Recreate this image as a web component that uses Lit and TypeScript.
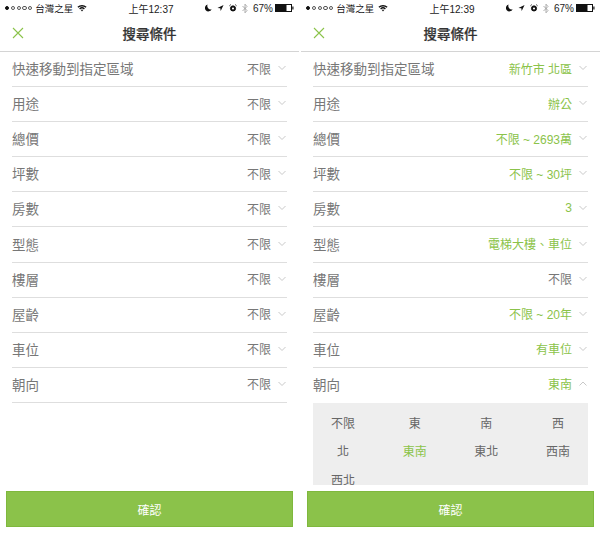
import { LitElement, html, css, svg } from 'lit';
import { customElement, property } from 'lit/decorators.js';

type Row = { label: string; value: string; on?: boolean; open?: boolean };

const LABELS = ['快速移動到指定區域', '用途', '總價', '坪數', '房數', '型態', '樓層', '屋齡', '車位', '朝向'];

const LEFT_ROWS: Row[] = LABELS.map((label) => ({ label, value: '不限' }));

const RIGHT_ROWS: Row[] = [
  { label: '快速移動到指定區域', value: '新竹市 北區', on: true },
  { label: '用途', value: '辦公', on: true },
  { label: '總價', value: '不限 ~ 2693萬', on: true },
  { label: '坪數', value: '不限 ~ 30坪', on: true },
  { label: '房數', value: '3', on: true },
  { label: '型態', value: '電梯大樓、車位', on: true },
  { label: '樓層', value: '不限' },
  { label: '屋齡', value: '不限 ~ 20年', on: true },
  { label: '車位', value: '有車位', on: true },
  { label: '朝向', value: '東南', on: true, open: true },
];

const DIRECTIONS = ['不限', '東', '南', '西', '北', '東南', '東北', '西南', '西北'];

@customElement('search-phone')
class SearchPhone extends LitElement {
  static styles = css`
    :host {
      display: flex;
      flex-direction: column;
      height: 533px;
      background: #fff;
      overflow: hidden;
    }
    .status {
      height: 16px;
      padding: 0 5px 1px;
      display: grid;
      grid-template-columns: 1fr auto 1fr;
      align-items: center;
      font-size: 10px;
      color: #222;
    }
    .status-left, .status-right {
      display: flex;
      align-items: center;
    }
    .status-left { gap: 3px; }
    .status-left .carrier { font-size: 9.5px; }
    .status-left svg { margin-left: 1px; }
    .status-right { justify-content: flex-end; gap: 5px; }
    .pct { margin-right: -3px; font-size: 10px; }
    .time { font-size: 10px; padding-left: 3px; }
    .dots { display: flex; gap: 1.6px; }
    .dot {
      width: 4.2px;
      height: 4.2px;
      border-radius: 50%;
      border: 0.6px solid #555;
      box-sizing: border-box;
    }
    .dot.full { background: #111; border-color: #111; }
    .nav {
      height: 32px;
      padding-bottom: 2px;
      border-bottom: 1px solid #d4d4d4;
      display: flex;
      align-items: center;
      justify-content: center;
      position: relative;
      font-size: 13.5px;
      font-weight: 500;
      -webkit-text-stroke: 0.2px #333;
      color: #333;
    }
    .close {
      position: absolute;
      left: 12px;
      top: 10px;
    }
    .list {
      height: 439px;
      overflow: hidden;
      padding: 0 12px;
      display: flex;
      flex-direction: column;
    }
    .row {
      flex: none;
      height: 32.1px;
      padding-bottom: 2px;
      border-bottom: 1px solid #dedede;
      display: flex;
      align-items: center;
      justify-content: space-between;
      font-size: 13.5px;
      color: #777;
    }
    .row.open { border-bottom: none; }
    .right {
      display: flex;
      align-items: center;
      gap: 7px;
      font-size: 12px;
      padding-right: 1px;
      color: #777;
    }
    .right .on, .panel .on { color: #8bc34a; }
    .panel {
      flex: none;
      background: #eeeeee;
      display: grid;
      grid-template-columns: repeat(4, 60px);
      justify-content: space-between;
      grid-auto-rows: 28.5px;
      align-items: center;
      justify-items: center;
      font-size: 12px;
      color: #666;
      padding-top: 5px;
      height: 77px;
      overflow: hidden;
      margin-top: 1px;
    }
    .confirm {
      margin: 0 6px;
      height: 36px;
      flex: none;
      box-sizing: border-box;
      background: #8bc24a;
      border: 1px solid #7fb83d;
      color: #fff;
      font-size: 12px;
      display: flex;
      align-items: center;
      justify-content: center;
    }
  `;

  @property() time = '';
  @property({ attribute: false }) rows: Row[] = [];

  wifi() {
    return html`<svg width="10" height="8" viewBox="0 0 12 9">
      <path d="M0.5 3 A8 8 0 0 1 11.5 3 L10.3 4.3 A6.2 6.2 0 0 0 1.7 4.3 Z" fill="#111"/>
      <path d="M2.6 5 A5 5 0 0 1 9.4 5 L8.3 6.2 A3.4 3.4 0 0 0 3.7 6.2 Z" fill="#111"/>
      <path d="M4.6 7 A2 2 0 0 1 7.4 7 L6 8.6 Z" fill="#111"/>
    </svg>`;
  }

  statusIcons() {
    return html`
      <svg width="7" height="8" viewBox="0 0 8 9"><path d="M3 0.5 A4 4 0 1 0 7.6 6 A4 4 0 0 1 3 0.5 Z" fill="#111"/></svg>
      <svg width="7" height="8" viewBox="0 0 8 9"><path d="M7.5 1 L0.5 4.5 L3.8 4.8 L4.2 8 Z" fill="#111"/></svg>
      <svg width="8" height="8" viewBox="0 0 9 9"><circle cx="4.5" cy="5" r="2.9" fill="#111" stroke="#111"/><circle cx="4.5" cy="5" r="1.2" fill="#fff"/><path d="M0.5 2 L2 0.7 M8.5 2 L7 0.7" stroke="#111"/></svg>
      <svg width="6" height="11" viewBox="0 0 6 11"><path d="M0.5 3 L5 7.5 L3 9.8 L3 1.2 L5 3.5 L0.5 8" fill="none" stroke="#999" stroke-width="0.8"/></svg>
    `;
  }

  battery() {
    return html`<svg width="19" height="8" viewBox="0 0 19 8">
      <rect x="0.5" y="0.5" width="16" height="7" fill="none" stroke="#111"/>
      <rect x="1" y="1" width="10.5" height="6" fill="#111"/>
      <rect x="17.3" y="2.5" width="1.2" height="3" fill="#111"/>
    </svg>`;
  }

  chevron(up = false) {
    const d = up ? 'M0.5 4.5 L4 1 L7.5 4.5' : 'M0.5 1 L4 4.5 L7.5 1';
    return html`<svg width="8" height="6" viewBox="0 0 8 6">${svg`<path d=${d} fill="none" stroke="#c8c8c8"/>`}</svg>`;
  }

  render() {
    return html`
      <div class="status">
        <div class="status-left">
          <span class="dots">
            <i class="dot full"></i><i class="dot"></i><i class="dot"></i><i class="dot"></i><i class="dot"></i>
          </span>
          <span class="carrier">台灣之星</span>
          ${this.wifi()}
        </div>
        <div class="time">上午${this.time}</div>
        <div class="status-right">
          ${this.statusIcons()}
          <span class="pct">67%</span>
          ${this.battery()}
        </div>
      </div>
      <div class="nav">
        <svg class="close" width="12" height="12" viewBox="0 0 12 12">
          <path d="M1 1 L11 11 M11 1 L1 11" stroke="#8bc34a" stroke-width="1.1"/>
        </svg>
        搜尋條件
      </div>
      <div class="list">
        ${this.rows.map((r) => html`
          <div class="row ${r.open ? 'open' : ''}">
            <span>${r.label}</span>
            <span class="right">
              <span class=${r.on ? 'on' : ''}>${r.value}</span>
              ${this.chevron(r.open)}
            </span>
          </div>
          ${r.open ? html`<div class="panel">
            ${DIRECTIONS.map((d) => html`<span class=${d === r.value ? 'on' : ''}>${d}</span>`)}
          </div>` : ''}
        `)}
      </div>
      <div class="confirm">確認</div>
    `;
  }
}

@customElement('app-root')
class AppRoot extends LitElement {
  static styles = css`
    :host {
      display: grid;
      grid-template-columns: 299px 299px;
      column-gap: 2px;
      width: 600px;
      height: 533px;
      background: #fff;
      font-family: "Liberation Sans", "Noto Sans CJK TC", sans-serif;
    }
  `;

  render() {
    return html`
      <search-phone time="12:37" .rows=${LEFT_ROWS}></search-phone>
      <search-phone time="12:39" .rows=${RIGHT_ROWS}></search-phone>
    `;
  }
}
